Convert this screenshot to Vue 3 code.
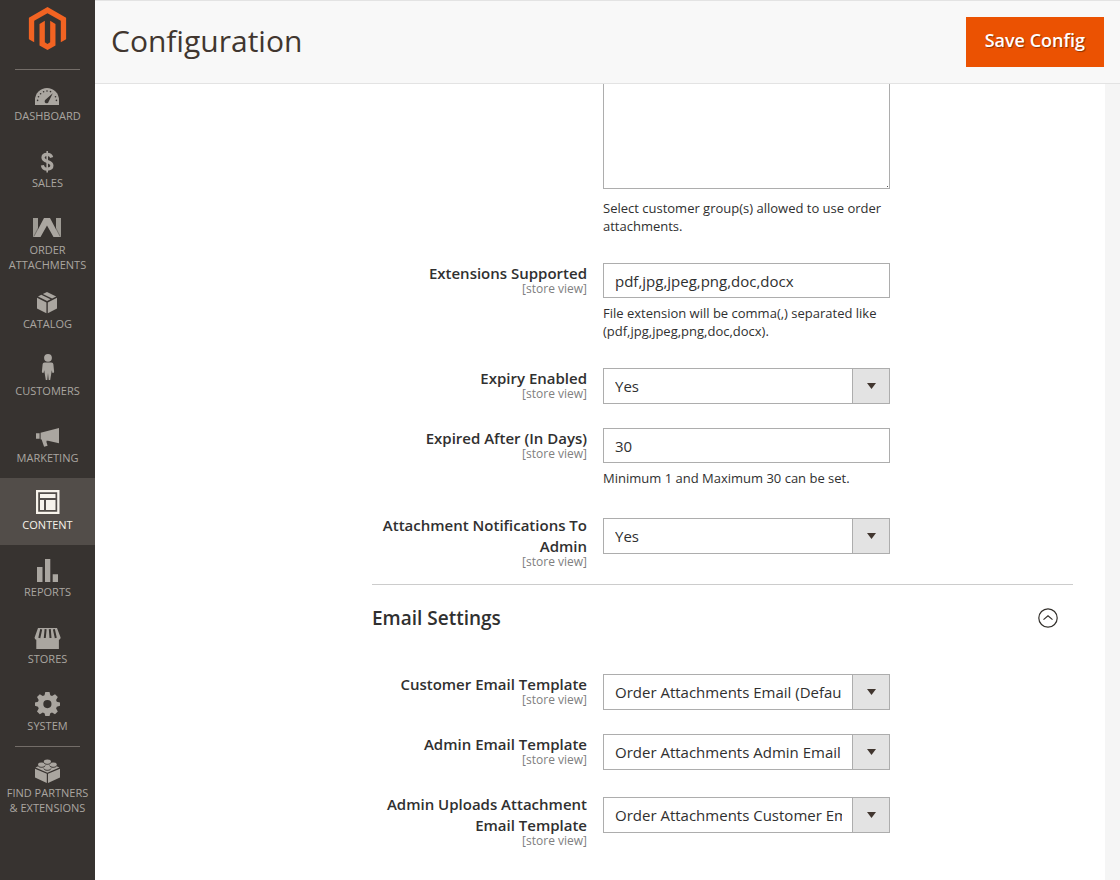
<script setup>
import { ref } from 'vue'

const navItems = [
  { id: 'dashboard', label: 'Dashboard' },
  { id: 'sales', label: 'Sales' },
  { id: 'order', label: 'Order Attachments' },
  { id: 'catalog', label: 'Catalog' },
  { id: 'customers', label: 'Customers' },
  { id: 'marketing', label: 'Marketing' },
  { id: 'content', label: 'Content', active: true },
  { id: 'reports', label: 'Reports' },
  { id: 'stores', label: 'Stores' },
  { id: 'system', label: 'System' },
  { id: 'partners', label: 'Find Partners & Extensions', divided: true },
]

const generalFields = ref([
  { id: 'groups', type: 'textarea', value: '', note: 'Select customer group(s) allowed to use order attachments.' },
  { id: 'extensions', label: 'Extensions Supported', type: 'text', value: 'pdf,jpg,jpeg,png,doc,docx', note: 'File extension will be comma(,) separated like (pdf,jpg,jpeg,png,doc,docx).' },
  { id: 'expiry', label: 'Expiry Enabled', type: 'select', value: 'Yes', options: ['Yes', 'No'] },
  { id: 'days', label: 'Expired After (In Days)', type: 'text', value: '30', note: 'Minimum 1 and Maximum 30 can be set.' },
  { id: 'notify', label: 'Attachment Notifications To Admin', type: 'select', value: 'Yes', options: ['Yes', 'No'], tall: true },
])

const emailFields = ref([
  { id: 'customer-template', label: 'Customer Email Template', type: 'select', value: 'Order Attachments Email (Default)', options: ['Order Attachments Email (Default)'] },
  { id: 'admin-template', label: 'Admin Email Template', type: 'select', value: 'Order Attachments Admin Email (Default)', options: ['Order Attachments Admin Email (Default)'] },
  { id: 'upload-template', label: 'Admin Uploads Attachment Email Template', type: 'select', value: 'Order Attachments Customer Email (Default)', options: ['Order Attachments Customer Email (Default)'], tall: true },
])

const emailOpen = ref(true)
const sections = [
  { id: 'general', fields: generalFields },
  { id: 'email', title: 'Email Settings', fields: emailFields },
]
</script>

<template>
  <div class="page">
    <aside class="sidebar">
      <a class="logo" href="#" aria-label="Magento">
        <svg width="43" height="43" viewBox="0 0 24 24" fill="#f26322">
          <path d="M12 24l-4.455-2.572v-12l2.97-1.715v12.001l1.485.902 1.485-.902V7.713l2.971 1.715v12L12 24zM22.391 6v12l-2.969 1.714V7.713L12 3.43 4.574 7.713v12.001L1.609 18V6L12 0l10.391 6z" />
        </svg>
      </a>
      <nav>
        <a v-for="item in navItems" :key="item.id" href="#" class="nav-item" :class="{ active: item.active, divided: item.divided }">
          <svg class="nav-icon" width="29" height="28" viewBox="0 0 29 28" fill="currentColor" aria-hidden="true">
            <template v-if="item.id === 'dashboard'">
              <path d="M2 25V20a12 12 0 0 1 24 0v5z" />
              <g class="cut">
                <path d="M19.8 13.2l-4.2 8.6a2 2 0 1 1-2.9-2.2z" />
                <circle cx="4.6" cy="20.4" r=".8" /><circle cx="5.5" cy="16.8" r=".8" /><circle cx="7.6" cy="13.7" r=".8" />
                <circle cx="10.6" cy="11.7" r=".8" /><circle cx="14" cy="11" r=".8" /><circle cx="17.5" cy="11.6" r=".8" />
                <circle cx="22.5" cy="16.8" r=".8" /><circle cx="23.4" cy="20.4" r=".8" />
              </g>
            </template>
            <g v-else-if="item.id === 'sales'" fill="none" stroke="currentColor">
              <path d="M18.7 10.4C18 8.2 16.5 7.3 14.2 7.3c-2.6 0-4.2 1.2-4.2 3.3 0 5 8.9 2.8 8.9 8 0 2.2-1.8 3.5-4.6 3.5-2.9 0-4.5-1.3-4.9-3.9" stroke-width="3.2" />
              <path d="M14.2 4v21.6" stroke-width="1.6" />
            </g>
            <g v-else-if="item.id === 'order'">
              <path d="M0 4h5v19H0zM23 4h5v19h-5z" opacity=".9" />
              <path d="M1 23L11 4h6L27 23h-6.500L14 11.500 7.500 23z" />
              <path class="groove" d="M.8 22.500L5.200 14M27.200 22.500L22.800 14" />
            </g>
            <g v-else-if="item.id === 'catalog'">
              <path d="M4 9.8l9.4 4.7v10.8L4 20.6zM14.8 14.5L24 9.8v10.8l-9.2 4.7zM5 8.4l3.3-1.6 9.2 4.5-3.4 1.8zM9.8 6.1L14 4l9.200 4.400-4.100 2.100z" />
            </g>
            <g v-else-if="item.id === 'customers'">
              <circle cx="15" cy="2.8" r="3.9" />
              <path d="M11.7 7.4h6.6c1.3 0 2 .9 2.1 2.1l.7 7.1c.1 1.4-1.2 1.8-1.8.8l-.5-2.2-1.6 9.8h-1.5L15 18l-.7 7h-1.5l-1.6-9.8-.5 2.2c-.6 1-1.9.6-1.8-.8l.7-7.1c.1-1.2.8-2.1 2.1-2.1z" />
            </g>
            <g v-else-if="item.id === 'marketing'">
              <path d="M3 11.3h3.6v5.4H3zM7.6 10.8L26 6v15.3L15 18.8h-1.5v1.4l1.1 3.5-3.500 1.100-2.500-7.300-1-.3z" />
            </g>
            <g v-else-if="item.id === 'content'">
              <path fill-rule="evenodd" d="M3 1h23.5v24H3zM5.200 3.200v19.600h19V3.200z" />
              <path d="M7 5h15.500v4H7zM7 11h4v10H7zM13 11h9.500v10H13z" />
            </g>
            <g v-else-if="item.id === 'reports'">
              <path d="M4 11h5.500v15H4zM12 3h5.300v23H12zM19.700 18.300H25V26h-5.300z" />
            </g>
            <g v-else-if="item.id === 'stores'">
              <path d="M5 5h19l3.600 9.600c0 1.200-.7 2-1.700 2.100V26H3.300v-9.300c-1-.1-1.700-.9-1.700-2.100z" />
              <path class="groove wide" d="M8.200 6.200L6.300 15M12.600 6.200L11.800 15M16.800 6.200L17.500 15M20.900 6.200L22.800 15" />
            </g>
            <g v-else-if="item.id === 'system'">
              <path fill-rule="evenodd" d="M12.300 2h4.200l.8 3.300 1.700.7 3-1.700 2.800 2.800-1.700 3 .7 1.700 3.200.8v3.200l-3.200.9-.7 1.800 1.700 2.900-2.800 2.800-3-1.700-1.700.7-.8 2.800h-4.200l-.8-2.800-1.700-.7-3 1.700L4 21.400l1.700-2.900-.7-1.800-3-.9v-3.200l3-.8.7-1.700-1.700-3 2.800-2.800 3 1.700 1.700-.7zM14.400 10a4.100 4.100 0 1 0 0 8.200 4.100 4.100 0 0 0 0-8.200z" />
            </g>
            <g v-else>
              <path d="M2 11.800l11.800 5V26L2 20.500zM15 16.800l12-5v8.700L15 26zM2.500 10.600L14.400 5l12 5.600-12 5.200z" />
              <ellipse cx="14.400" cy="4.800" rx="3.600" ry="2.200" /><ellipse cx="8.600" cy="7.800" rx="3.600" ry="2.200" />
              <ellipse cx="20.200" cy="7.800" rx="3.600" ry="2.200" /><ellipse cx="14.400" cy="10.800" rx="3.600" ry="2.200" />
              <path class="stud" d="M10.800 5.600c1 2.300 6.200 2.300 7.200 0M5 8.600c1 2.300 6.200 2.300 7.200 0M16.600 8.600c1 2.300 6.200 2.300 7.200 0M10.800 11.600c1 2.300 6.200 2.300 7.200 0" />
            </g>
          </svg>
          <span>{{ item.label }}</span>
        </a>
      </nav>
    </aside>

    <div class="workspace">
      <header class="topbar">
        <h1>Configuration</h1>
        <button type="button" class="save">Save Config</button>
      </header>

      <main class="content">
        <form class="form" @submit.prevent>
          <section v-for="section in sections" :key="section.id" class="section">
            <h2 v-if="section.title">
              <span>{{ section.title }}</span>
              <button type="button" class="toggle" aria-label="Toggle section" :aria-expanded="emailOpen" @click="emailOpen = !emailOpen">
                <svg width="20" height="20" viewBox="0 0 20 20" fill="none" stroke="#33302c" stroke-width="1.2">
                  <circle cx="10" cy="10" r="9.2" />
                  <path d="M5.500 11.600L10 7.900l4.500 3.700" />
                </svg>
              </button>
            </h2>
            <template v-if="!section.title || emailOpen">
              <div v-for="field in section.fields.value" :key="field.id" class="row" :class="{ noted: field.note, tall: field.tall }">
                <label :for="field.id" class="label">
                  <template v-if="field.label">
                    <span class="name">{{ field.label }}</span>
                    <span class="scope">[store view]</span>
                  </template>
                </label>
                <div class="control">
                  <textarea v-if="field.type === 'textarea'" :id="field.id" v-model="field.value" aria-label="Customer groups"></textarea>
                  <input v-else-if="field.type === 'text'" :id="field.id" v-model="field.value" type="text" />
                  <div v-else class="select">
                    <select :id="field.id" v-model="field.value">
                      <option v-for="option in field.options" :key="option">{{ option }}</option>
                    </select>
                    <span class="arrow" aria-hidden="true">
                      <svg width="9" height="6" viewBox="0 0 9 6"><path d="M0 0h9L4.500 6z" fill="#41362f" /></svg>
                    </span>
                  </div>
                  <p v-if="field.note" class="note">{{ field.note }}</p>
                </div>
              </div>
            </template>
          </section>
        </form>
      </main>
    </div>
  </div>
</template>

<style>
body {
  background: #fff;
}
</style>

<style scoped>
.page {
  display: flex;
  height: 100vh;
  overflow: hidden;
  font-family: "Open Sans", "Noto Sans", sans-serif;
  color: #303030;
}
.page * {
  box-sizing: border-box;
}
.sidebar {
  flex: 0 0 95px;
  background: #373330;
}
.logo {
  display: flex;
  justify-content: center;
  height: 69px;
  padding-top: 7px;
}
.nav-item {
  position: relative;
  display: flex;
  flex-direction: column;
  align-items: center;
  min-height: 67px;
  padding: 11px 4px 5px;
  color: #aaa6a0;
  font-size: 11px;
  line-height: 15px;
  text-align: center;
  text-transform: uppercase;
  text-decoration: none;
}
.nav-item:first-child::before,
.divided::before {
  content: "";
  position: absolute;
  top: 0;
  left: 15px;
  right: 15px;
  height: 1px;
  background: #736d68;
}
.nav-item.active {
  background: #524d49;
  color: #f7f3eb;
}
.nav-icon {
  flex: none;
  overflow: visible;
}
.cut {
  fill: #373330;
}
.groove {
  fill: none;
  stroke: #77736e;
  stroke-width: 1;
}
.groove.wide {
  stroke: #373330;
  stroke-width: 2;
}
.stud {
  fill: none;
  stroke: #373330;
  stroke-width: 1;
}
.workspace {
  flex: 1;
  min-width: 0;
  display: flex;
  flex-direction: column;
  background: #f5f5f5;
}
.topbar {
  flex: none;
  display: flex;
  align-items: flex-start;
  justify-content: space-between;
  padding: 16px 16px;
  border-top: 1px solid #e3e3e3;
  border-bottom: 1px solid #e3e3e3;
  background: #f8f8f8;
}
h1 {
  margin: 0;
  font-size: 30px;
  line-height: 48px;
  font-weight: 400;
  color: #41362f;
}
.save {
  height: 50px;
  padding: 0 18px 4px;
  border: 1px solid #eb5202;
  background: #eb5202;
  color: #fff;
  font: 600 18px/24px "Open Sans", sans-serif;
  text-shadow: 1px 1px 1px rgba(0, 0, 0, 0.4);
}
.content {
  flex: 1;
  min-height: 0;
  margin-right: 15px;
  padding: 0 32px 0 277px;
  background: #fff;
  overflow: hidden;
}
.section + .section {
  margin-top: 17px;
  border-top: 1px solid #ccc;
}
h2 {
  display: flex;
  justify-content: space-between;
  align-items: center;
  margin: 0 0 43px;
  padding: 20px 15px 0 0;
  font-size: 19px;
  line-height: 26px;
  font-weight: 600;
}
.toggle {
  display: flex;
  padding: 0;
  border: 0;
  background: none;
}
.row {
  display: grid;
  grid-template-columns: 215fr 287fr 167fr;
  column-gap: 16px;
}
.row + .row {
  margin-top: 24px;
}
.row.noted + .row {
  margin-top: 28px;
}
.label {
  text-align: right;
}
.name,
.scope {
  display: block;
}
.name {
  font-size: 15px;
  line-height: 21px;
  font-weight: 600;
}
.scope {
  font-size: 12px;
  line-height: 10px;
  color: #808080;
}
.tall .control {
  padding-top: 3px;
}
textarea,
input,
select {
  display: block;
  width: 100%;
  margin: 0;
  border: 1px solid #adadad;
  border-radius: 0;
  background: #fff;
  color: #303030;
  font: 400 15px/20px "Open Sans", sans-serif;
  outline: none;
}
textarea {
  height: 105px;
  border-top: 0;
  resize: none;
  background: linear-gradient(#555, #555) right 1px bottom 1px / 1px 1px no-repeat #fff;
}
input {
  height: 35px;
  padding: 0 11px;
}
.select {
  position: relative;
}
select {
  height: 36px;
  padding: 0 47px 0 11px;
  appearance: none;
}
.arrow {
  position: absolute;
  top: 1px;
  right: 1px;
  bottom: 1px;
  width: 37px;
  display: flex;
  align-items: center;
  justify-content: center;
  border-left: 1px solid #adadad;
  background: #e3e3e3;
  pointer-events: none;
}
.note {
  margin: 6px 0 0;
  font-size: 13px;
  line-height: 18px;
}
textarea + .note {
  margin-top: 10px;
}
</style>
